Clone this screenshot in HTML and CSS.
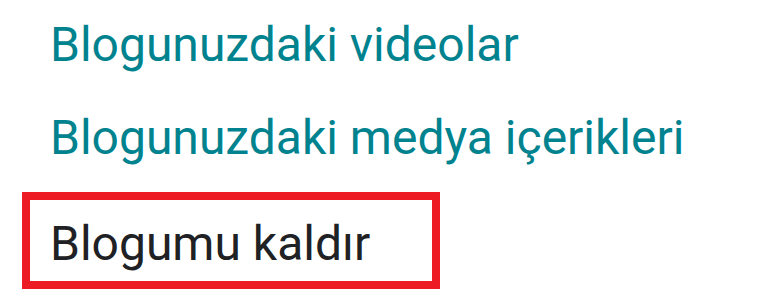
FILE: index.html
```html
<!DOCTYPE html>
<html lang="tr">
<head>
<meta charset="utf-8">
<title>Blog menüsü</title>
<link rel="stylesheet" href="styles.css">
</head>
<body>
<ul class="menu">
  <li class="item"><a class="link" href="#">Blogunuzdaki videolar</a></li>
  <li class="item"><a class="link" href="#">Blogunuzdaki medya içerikleri</a></li>
  <li class="item item-highlight"><span class="plain">Blogumu kaldır</span></li>
</ul>
</body>
</html>
```

FILE: styles.css
```css
html, body {
  margin: 0;
  padding: 0;
  background: #ffffff;
}

.menu {
  list-style: none;
  margin: 0;
  padding: 17px 0 0 0;
  display: flex;
  flex-direction: column;
  align-items: flex-start;
  font-family: Roboto, "Noto Sans", "Liberation Sans", sans-serif;
  font-size: 48px;
  line-height: 56px;
}

.item {
  padding-left: 50px;
}

.item + .item {
  margin-top: 37px;
}

.link {
  color: #00838f;
  text-decoration: none;
}

.item.item-highlight {
  margin-top: 26px;
  margin-left: 22px;
  padding: 16px 0 9px 20px;
  width: 418px;
  box-sizing: border-box;
  border: 8px solid #ed1c24;
}

.plain {
  color: #202124;
}
```
